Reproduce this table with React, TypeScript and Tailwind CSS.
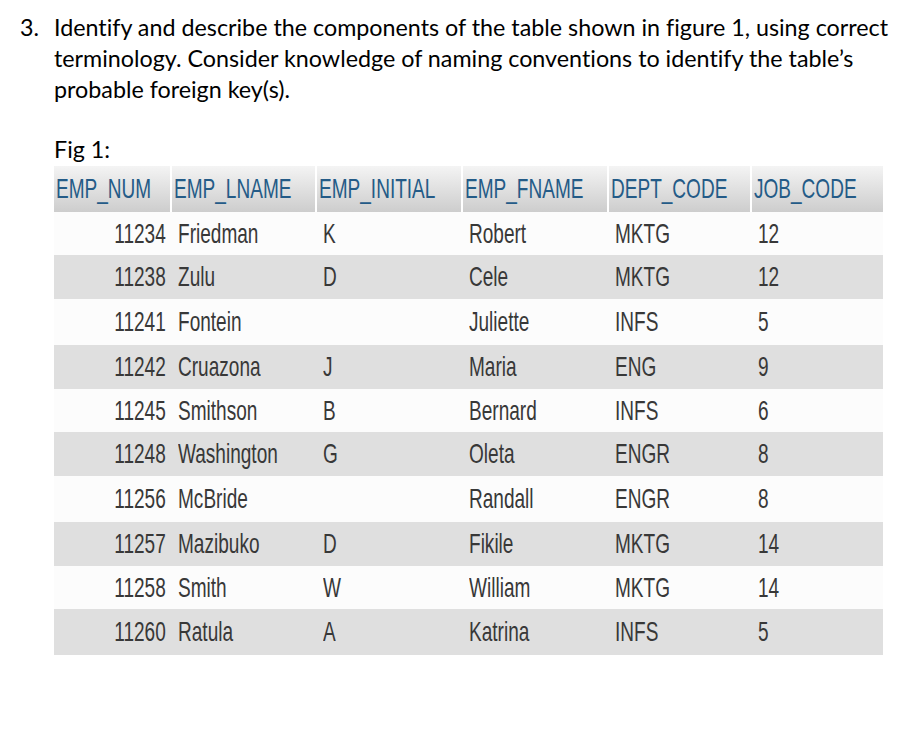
import React from "react";

const headers = ["EMP_NUM", "EMP_LNAME", "EMP_INITIAL", "EMP_FNAME", "DEPT_CODE", "JOB_CODE"];
const widths = ["w-[118px]", "w-[145px]", "w-[146px]", "w-[146px]", "w-[143px]", "w-[131px]"];

const rows: { h: string; bg: string; cells: string[] }[] = [
  { h: "h-[43px]", bg: "bg-[#fcfcfc]", cells: ["11234", "Friedman", "K", "Robert", "MKTG", "12"] },
  { h: "h-[44px]", bg: "bg-[#dfdfdf]", cells: ["11238", "Zulu", "D", "Cele", "MKTG", "12"] },
  { h: "h-[46px]", bg: "bg-[#fcfcfc]", cells: ["11241", "Fontein", "", "Juliette", "INFS", "5"] },
  { h: "h-[44px]", bg: "bg-[#dfdfdf]", cells: ["11242", "Cruazona", "J", "Maria", "ENG", "9"] },
  { h: "h-[43px]", bg: "bg-[#fcfcfc]", cells: ["11245", "Smithson", "B", "Bernard", "INFS", "6"] },
  { h: "h-[44px]", bg: "bg-[#dfdfdf]", cells: ["11248", "Washington", "G", "Oleta", "ENGR", "8"] },
  { h: "h-[46px]", bg: "bg-[#fcfcfc]", cells: ["11256", "McBride", "", "Randall", "ENGR", "8"] },
  { h: "h-[44px]", bg: "bg-[#dfdfdf]", cells: ["11257", "Mazibuko", "D", "Fikile", "MKTG", "14"] },
  { h: "h-[43px]", bg: "bg-[#fcfcfc]", cells: ["11258", "Smith", "W", "William", "MKTG", "14"] },
  { h: "h-[46px]", bg: "bg-[#dfdfdf]", cells: ["11260", "Ratula", "A", "Katrina", "INFS", "5"] },
];

export default function App() {
  return (
    <div
      className="w-[907px] h-[751px] bg-white overflow-hidden"
      style={{ fontFamily: "Lato, 'Open Sans', sans-serif", fontVariantLigatures: "none" }}
    >
      <div className="pt-[12px] pl-[20px] text-[23.3px] leading-[31px] text-black">
        <div className="flex">
          <div className="w-[34px] shrink-0">3.</div>
          <div className="w-[850px] whitespace-nowrap">
            Identify and describe the components of the table shown in figure 1, using correct
            <br />
            terminology. Consider knowledge of naming conventions to identify the table’s
            <br />
            probable foreign key(s).
          </div>
        </div>
      </div>
      <div className="pl-[54px] pt-[31px] text-[23.3px] leading-[26px] text-black">Fig 1:</div>
      <div className="ml-[54px] mt-[4px] w-[829px]" style={{ fontFamily: "'Liberation Sans', Arial, sans-serif" }}>
        <div className="flex h-[46px] bg-gradient-to-b from-[#f4f4f4] to-[#cdcdcd]">
          {headers.map((h, i) => (
            <div
              key={h}
              className={`${widths[i]} flex items-center pl-[2px] text-[28px] text-[#245b87] ${i < headers.length - 1 ? "border-r-2 border-white" : ""}`}
            >
              <span className="inline-block scale-x-[0.68] origin-left whitespace-nowrap">{h}</span>
            </div>
          ))}
        </div>
        {rows.map((r, ri) => (
          <div key={ri} className={`flex ${r.h} ${r.bg}`}>
            {r.cells.map((c, ci) => (
              <div
                key={ci}
                className={`${widths[ci]} flex items-center text-[28px] text-[#383838] ${ci === 0 ? "justify-end pr-[6px]" : "pl-[6px]"}`}
              >
                <span className={`inline-block scale-x-[0.68] whitespace-nowrap ${ci === 0 ? "origin-right" : "origin-left"}`}>{c}</span>
              </div>
            ))}
          </div>
        ))}
      </div>
    </div>
  );
}
